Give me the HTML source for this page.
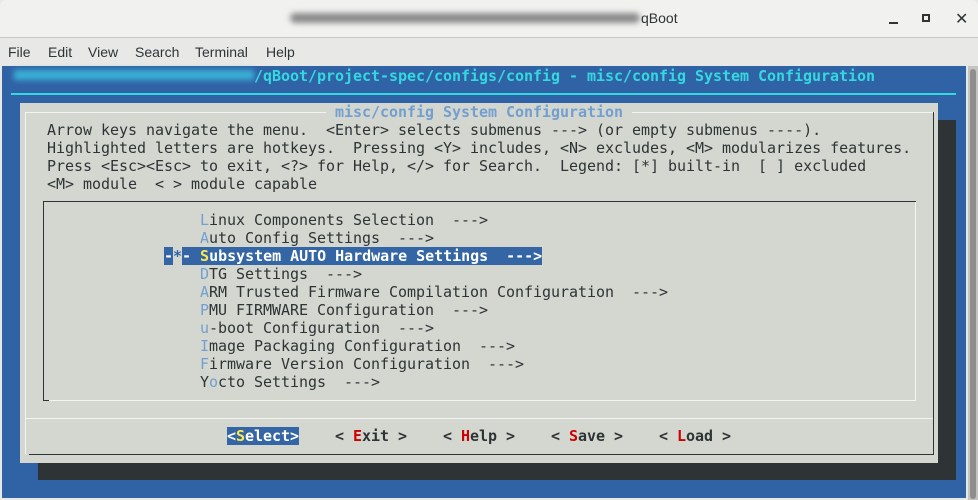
<!DOCTYPE html>
<html><head><meta charset="utf-8"><style>
*{margin:0;padding:0;box-sizing:border-box}
body{width:978px;height:500px;overflow:hidden;background:#e8e8e7;position:relative;font-family:"Liberation Sans",sans-serif}
.tb{position:absolute;left:0;top:0;width:978px;height:38px;background:#f1f1f0;border-bottom:1px solid #c8c8c6;border-radius:6px 6px 0 0}
.blur{position:absolute;left:290px;top:13px;width:350px;height:10px;background:#8a8a8a;filter:blur(3px);border-radius:5px}
.title{position:absolute;left:641px;top:10px;font-size:14px;color:#2e3436}
.mb{position:absolute;top:44px;font-size:14px;color:#2e3436}
.term{position:absolute;left:2px;top:66px;width:964px;height:432px;background:#3063a5}
.sb{position:absolute;left:968px;top:66px;width:10px;height:434px;background:#c4c4c2}
.sb div{position:absolute;left:2px;top:3px;width:6px;height:430px;background:#8e8e8c;border-radius:3px}
pre{position:absolute;font-family:"DejaVu Sans Mono","Liberation Mono",monospace;font-size:15px;letter-spacing:-0.03px;line-height:18px;height:18px;color:#2e3436;white-space:pre;margin-top:1px}
.c{color:#34d9e0}
.h{color:#729fcf}
.b{font-weight:bold}
.r{color:#cc0000}
.y{color:#fce94f}
.sel{background:#3465a4;color:#fff}
.ln{position:absolute}
</style></head><body>
<div class="tb"><div class="blur"></div><div class="title">qBoot</div>
<div style="position:absolute;left:889px;top:22px;width:9px;height:2px;background:#2e3436"></div>
<div style="position:absolute;left:922px;top:14px;width:8px;height:8px;border:2px solid #2e3436"></div>
<div style="position:absolute;left:955px;top:9px;font-size:16px;color:#2e3436">✕</div>
</div>
<div class="mb" style="left:8px">File</div>
<div class="mb" style="left:48px">Edit</div>
<div class="mb" style="left:88px">View</div>
<div class="mb" style="left:135px">Search</div>
<div class="mb" style="left:195px">Terminal</div>
<div class="mb" style="left:266px">Help</div>
<div class="term"></div>
<div class="sb"><div></div></div>
<div style="position:absolute;left:14px;top:70px;width:240px;height:10px;background:#3ab0d8;filter:blur(3px)"></div>
<pre class="c b" style="left:254px;top:66px">/qBoot/project-spec/configs/config - misc/config System Configuration</pre>
<div class="ln" style="left:11px;top:93px;width:945px;height:2px;background:#34d9e0"></div>
<div class="ln" style="left:38px;top:120px;width:918px;height:360px;background:#2e3436"></div>
<div class="ln" style="left:20px;top:103px;width:918px;height:360px;background:#d3d7cf"></div>
<div class="ln" style="left:25px;top:112px;width:910px;height:1px;background:#f4f4f2"></div>
<div class="ln" style="left:25px;top:112px;width:1px;height:342px;background:#f4f4f2"></div>
<div class="ln" style="left:29px;top:454px;width:905px;height:1px;background:#2e3436"></div>
<div class="ln" style="left:933px;top:112px;width:1px;height:343px;background:#2e3436"></div>
<div class="ln" style="left:26px;top:418px;width:907px;height:1px;background:#f4f4f2"></div>
<pre class="h b" style="left:326px;top:102px;background:#d3d7cf"> misc/config System Configuration </pre>
<pre style="left:47px;top:120px">Arrow keys navigate the menu.  &lt;Enter&gt; selects submenus ---&gt; (or empty submenus ----).</pre>
<pre style="left:47px;top:138px">Highlighted letters are hotkeys.  Pressing &lt;Y&gt; includes, &lt;N&gt; excludes, &lt;M&gt; modularizes features.</pre>
<pre style="left:47px;top:156px">Press &lt;Esc&gt;&lt;Esc&gt; to exit, &lt;?&gt; for Help, &lt;/&gt; for Search.  Legend: [*] built-in  [ ] excluded</pre>
<pre style="left:47px;top:174px">&lt;M&gt; module  &lt; &gt; module capable</pre>
<div class="ln" style="left:43px;top:201px;width:873px;height:1px;background:#2e3436"></div>
<div class="ln" style="left:43px;top:201px;width:1px;height:199px;background:#2e3436"></div>
<div class="ln" style="left:43px;top:400px;width:6px;height:1px;background:#2e3436"></div>
<div class="ln" style="left:49px;top:400px;width:867px;height:1px;background:#f4f4f2"></div>
<div class="ln" style="left:915px;top:202px;width:1px;height:198px;background:#f4f4f2"></div>
<pre style="left:200px;top:210px"><span class="h">L</span>inux Components Selection  ---&gt;</pre>
<pre style="left:200px;top:228px"><span class="h">A</span>uto Config Settings  ---&gt;</pre>
<pre class="sel b" style="left:164px;top:246px">-<span style="background:#d3d7cf;color:#3465a4">*</span>- <span class="y">S</span>ubsystem AUTO Hardware Settings  ---&gt;</pre>
<pre style="left:200px;top:264px"><span class="h">D</span>TG Settings  ---&gt;</pre>
<pre style="left:200px;top:282px"><span class="h">A</span>RM Trusted Firmware Compilation Configuration  ---&gt;</pre>
<pre style="left:200px;top:300px"><span class="h">P</span>MU FIRMWARE Configuration  ---&gt;</pre>
<pre style="left:200px;top:318px"><span class="h">u</span>-boot Configuration  ---&gt;</pre>
<pre style="left:200px;top:336px"><span class="h">I</span>mage Packaging Configuration  ---&gt;</pre>
<pre style="left:200px;top:354px"><span class="h">F</span>irmware Version Configuration  ---&gt;</pre>
<pre style="left:200px;top:372px">Y<span class="h">o</span>cto Settings  ---&gt;</pre>
<pre class="b sel" style="left:227px;top:426px">&lt;<span class="y">S</span>elect&gt;</pre>
<pre class="b" style="left:335px;top:426px">&lt; <span class="r">E</span>xit &gt;</pre>
<pre class="b" style="left:443px;top:426px">&lt; <span class="r">H</span>elp &gt;</pre>
<pre class="b" style="left:551px;top:426px">&lt; <span class="r">S</span>ave &gt;</pre>
<pre class="b" style="left:659px;top:426px">&lt; <span class="r">L</span>oad &gt;</pre>
</body></html>
